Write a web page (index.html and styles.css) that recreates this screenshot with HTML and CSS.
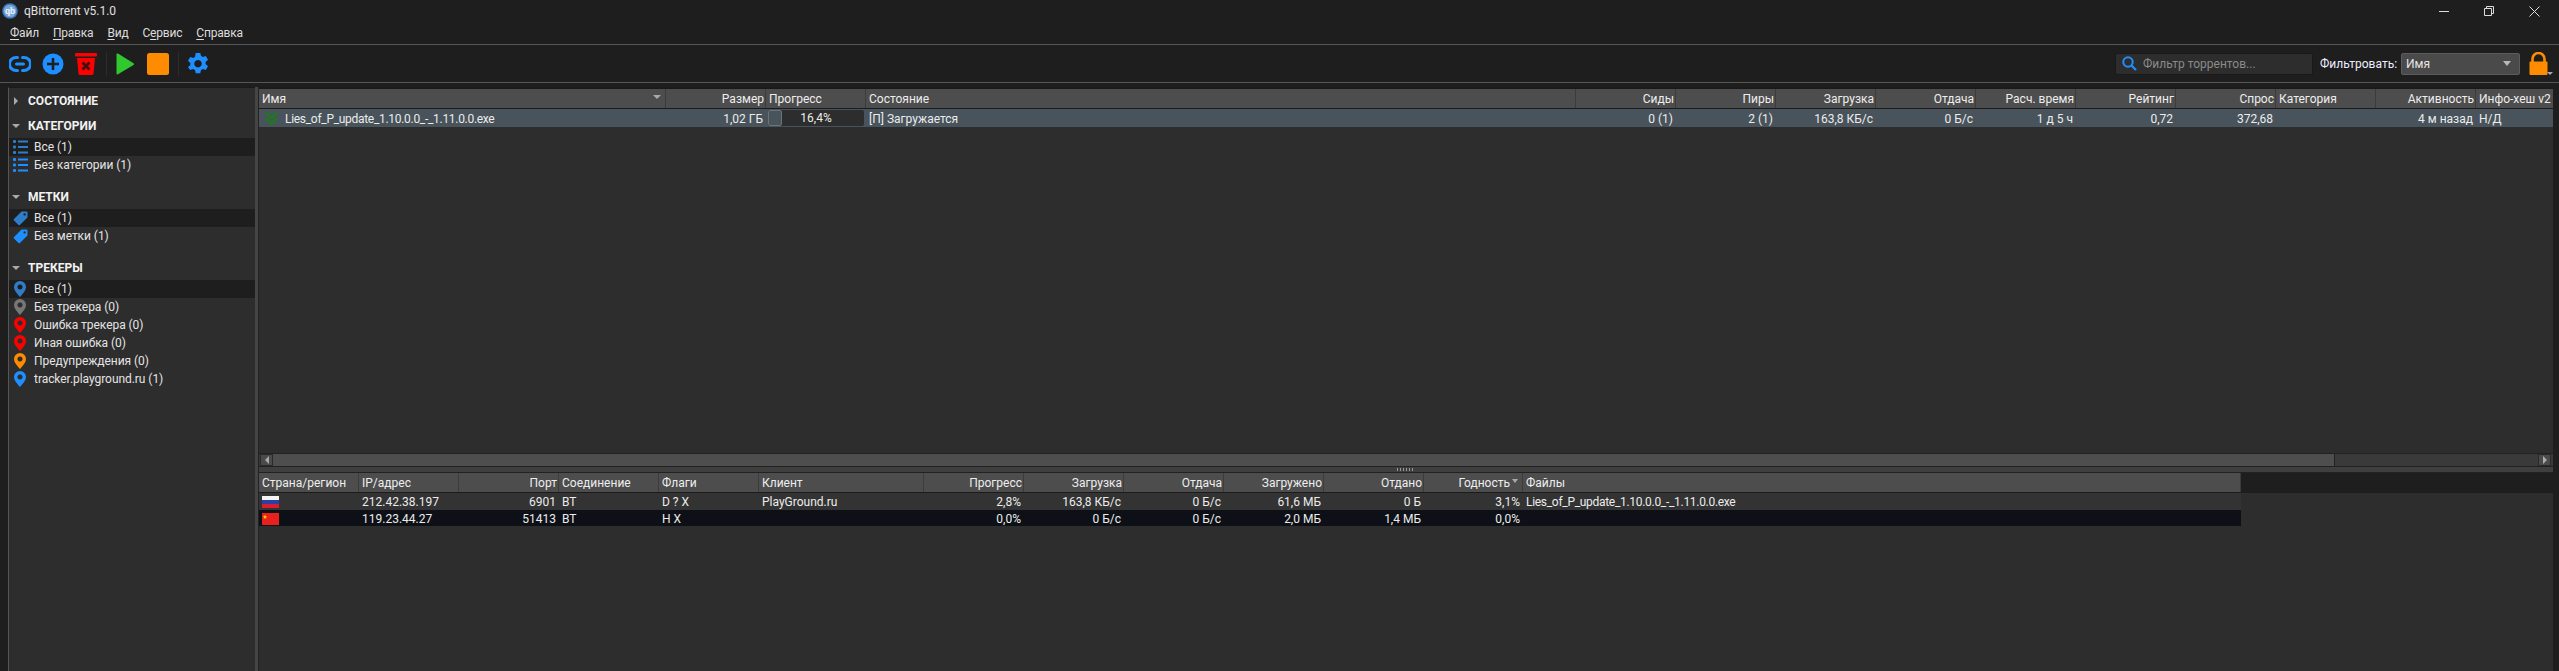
FILE: index.html
```html
<!DOCTYPE html>
<html lang="ru">
<head>
<meta charset="utf-8">
<title>qBittorrent v5.1.0</title>
<link rel="stylesheet" href="styles.css">
</head>
<body>
<svg class="defs" width="0" height="0">
  <defs>
    <symbol id="i-list" viewBox="0 0 15 14"><g fill="currentColor"><rect x="0" y="0" width="3" height="3" rx="1"/><rect x="5" y="0.5" width="10" height="2"/><rect x="0" y="5.5" width="3" height="3" rx="1"/><rect x="5" y="6" width="10" height="2"/><rect x="0" y="11" width="3" height="3" rx="1"/><rect x="5" y="11.5" width="10" height="2"/></g></symbol>
    <symbol id="i-tag" viewBox="0 0 15 15"><path fill="currentColor" fill-rule="evenodd" d="M9 0.5h4.5a1 1 0 0 1 1 1V6a1 1 0 0 1-.3.7L6.9 14a1 1 0 0 1-1.4 0L1 9.5a1 1 0 0 1 0-1.4L8.3.8A1 1 0 0 1 9 .5zM11.6 2.2a1.2 1.2 0 1 0 .01 0z"/></symbol>
    <symbol id="i-pin" viewBox="0 0 12 16"><path fill="currentColor" fill-rule="evenodd" d="M6 0a6 6 0 0 1 6 6c0 3.4-3.6 7.4-6 10C3.600 13.400 0 9.400 0 6a6 6 0 0 1 6-6zM6 3.400a2.600 2.600 0 1 0 .01 0z"/></symbol>
  </defs>
</svg>
<div class="window">
  <header class="titlebar">
    <svg class="logo" viewBox="0 0 16 16" width="16" height="16"><circle cx="8" cy="8" r="7.800" fill="#3c78bd"/><circle cx="8" cy="8" r="6.300" fill="#7ba7d8"/><text x="8" y="10.800" text-anchor="middle" class="logo-text">qb</text></svg>
    <span class="title">qBittorrent v5.1.0</span>
    <div class="caption">
      <svg width="10" height="10" viewBox="0 0 10 10"><path d="M0 5.500h10" stroke="#ddd" fill="none"/></svg>
      <svg width="10" height="10" viewBox="0 0 10 10"><path d="M.5 2.500h7v7h-7zM2.500 2.500V.5h7v7H7.500" stroke="#ddd" fill="none"/></svg>
      <svg width="11" height="11" viewBox="0 0 11 11"><path d="M.5.5l10 10M10.500.5l-10 10" stroke="#ddd" fill="none"/></svg>
    </div>
  </header>
  <nav class="menubar">
    <span class="menu m1"><u>Ф</u>айл</span>
    <span class="menu m2"><u>П</u>равка</span>
    <span class="menu m3"><u>В</u>ид</span>
    <span class="menu m4">С<u>е</u>рвис</span>
    <span class="menu m5"><u>С</u>правка</span>
  </nav>
  <div class="toolbar">
    <svg class="tool" width="22" height="22" viewBox="0 0 22 22"><path d="M8.500 4.500H7a6.500 6.500 0 0 0 0 13h1.500M13.500 4.500H15a6.500 6.500 0 0 1 0 13h-1.500" stroke="#1e8fff" stroke-width="3" fill="none" stroke-linecap="round"/><path d="M7.500 11h7" stroke="#1e8fff" stroke-width="3" stroke-linecap="round"/></svg>
    <svg class="tool t-add" width="22" height="22" viewBox="0 0 22 22"><circle cx="11" cy="11" r="10.500" fill="#1e8fff"/><path d="M11 5v12M5 11h12" stroke="#1e1e1e" stroke-width="2.600"/></svg>
    <svg class="tool t-del" width="22" height="22" viewBox="0 0 22 22"><rect x="0" y="0" width="22" height="3.500" rx="1" fill="#f00"/><path d="M2 5h18l-1.500 15.500a1.500 1.500 0 0 1-1.500 1.500H5a1.500 1.500 0 0 1-1.500-1.500z" fill="#f00"/><path d="M7.500 9.500l7 7M14.500 9.500l-7 7" stroke="#401010" stroke-width="2.800"/></svg>
    <span class="tool-sep s1"></span>
    <svg class="tool t-play" width="18" height="22" viewBox="0 0 18 22"><path d="M1.500 0.500a1 1 0 0 0-1 1v19a1 1 0 0 0 1.500.8L17.500 12a1 1 0 0 0 0-1.800L2 .6a1 1 0 0 0-.5-.1z" fill="#2fc82f"/></svg>
    <svg class="tool t-stop" width="22" height="22" viewBox="0 0 22 22"><rect width="22" height="22" rx="2.500" fill="#ff8c00"/></svg>
    <span class="tool-sep s2"></span>
    <svg class="tool t-gear" width="22" height="22" viewBox="0 0 22 22"><path fill="#1e8fff" fill-rule="evenodd" d="M8.700 0h4.600l.6 3.100 1.900 1.100 3-1 2.200 3.900-2.400 2.100v2.200l2.400 2.100-2.200 3.900-3-1-1.900 1.100-.6 3.100H8.700l-.6-3.100-1.900-1.100-3 1L1 14.500l2.400-2.100v-2.200L1 8.100l2.200-3.900 3 1 1.900-1.100zM11 7.300a3.700 3.700 0 1 0 .01 0z" transform="translate(0 -.3)"/></svg>
    <div class="filter-group">
      <label class="search">
        <svg width="15" height="15" viewBox="0 0 15 15"><circle cx="6" cy="6" r="4.700" stroke="#1e8fff" stroke-width="2" fill="none"/><path d="M9.500 9.500l4.500 4.500" stroke="#1e8fff" stroke-width="2.200"/></svg>
        <span class="placeholder">Фильтр торрентов...</span>
      </label>
      <span class="filter-label">Фильтровать:</span>
      <div class="combo"><span>Имя</span><i class="tri tri-combo"></i></div>
      <div class="lock">
        <svg width="19" height="23" viewBox="0 0 19 23"><path d="M3.500 11V7a6 6 0 0 1 12 0v4" stroke="#ff8c00" stroke-width="2.600" fill="none"/><rect x="0.500" y="9.500" width="18" height="13.500" rx="1" fill="#ff8c00"/></svg>
        <i class="tri tri-lock"></i>
      </div>
    </div>
  </div>
  <div class="workspace">
    <aside class="sidebar">
      <section class="group">
        <h2 class="group-head"><i class="tri-right"></i>СОСТОЯНИЕ</h2>
      </section>
      <section class="group">
        <h2 class="group-head"><i class="tri tri-head"></i>КАТЕГОРИИ</h2>
        <div class="item selected"><svg class="ico ic-dim" width="15" height="14"><use href="#i-list"/></svg>Все (1)</div>
        <div class="item"><svg class="ico ic-blue" width="15" height="14"><use href="#i-list"/></svg>Без категории (1)</div>
      </section>
      <section class="group">
        <h2 class="group-head"><i class="tri tri-head"></i>МЕТКИ</h2>
        <div class="item selected"><svg class="ico ic-dim" width="15" height="15"><use href="#i-tag"/></svg>Все (1)</div>
        <div class="item"><svg class="ico ic-blue" width="15" height="15"><use href="#i-tag"/></svg>Без метки (1)</div>
      </section>
      <section class="group">
        <h2 class="group-head"><i class="tri tri-head"></i>ТРЕКЕРЫ</h2>
        <div class="item selected"><svg class="ico pin ic-dim" width="12" height="16"><use href="#i-pin"/></svg>Все (1)</div>
        <div class="item"><svg class="ico pin ic-grey" width="12" height="16"><use href="#i-pin"/></svg>Без трекера (0)</div>
        <div class="item"><svg class="ico pin ic-red" width="12" height="16"><use href="#i-pin"/></svg>Ошибка трекера (0)</div>
        <div class="item"><svg class="ico pin ic-red" width="12" height="16"><use href="#i-pin"/></svg>Иная ошибка (0)</div>
        <div class="item"><svg class="ico pin ic-orange" width="12" height="16"><use href="#i-pin"/></svg>Предупреждения (0)</div>
        <div class="item"><svg class="ico pin ic-blue" width="12" height="16"><use href="#i-pin"/></svg>tracker.playground.ru (1)</div>
      </section>
    </aside>
    <div class="vsplit"></div>
    <main class="main">
      <section class="torrents">
        <div class="t-grid t-head">
          <div class="hc name-head">Имя<i class="tri tri-sort"></i></div>
          <div class="hc r">Размер</div>
          <div class="hc">Прогресс</div>
          <div class="hc">Состояние</div>
          <div class="hc r">Сиды</div>
          <div class="hc r">Пиры</div>
          <div class="hc r">Загрузка</div>
          <div class="hc r">Отдача</div>
          <div class="hc r">Расч. время</div>
          <div class="hc r">Рейтинг</div>
          <div class="hc r">Спрос</div>
          <div class="hc">Категория</div>
          <div class="hc r">Активность</div>
          <div class="hc">Инфо-хеш v2</div>
        </div>
        <div class="t-grid t-row">
          <div class="c name-cell">
            <svg class="chev" width="13" height="13" viewBox="0 0 13 13"><path d="M1 1l5.500 4.500L12 1M1 7l5.500 4.500L12 7" stroke="#1d7a1d" stroke-width="2.600" fill="none"/></svg>
            <span class="fname">Lies_of_P_update_1.10.0.0_-_1.11.0.0.exe</span>
          </div>
          <div class="c r">1,02 ГБ</div>
          <div class="c prog"><div class="bar"><span class="chunk"></span><span class="bar-text">16,4%</span></div></div>
          <div class="c">[П] Загружается</div>
          <div class="c r">0 (1)</div>
          <div class="c r">2 (1)</div>
          <div class="c r">163,8 КБ/с</div>
          <div class="c r">0 Б/с</div>
          <div class="c r">1 д 5 ч</div>
          <div class="c r">0,72</div>
          <div class="c r">372,68</div>
          <div class="c"></div>
          <div class="c r">4 м назад</div>
          <div class="c">Н/Д</div>
        </div>
        <div class="t-fill"></div>
        <div class="hscroll">
          <span class="sb-btn"><i class="sb-left"></i></span>
          <span class="sb-thumb"></span>
          <span class="sb-track"></span>
          <span class="sb-btn"><i class="sb-right"></i></span>
        </div>
      </section>
      <div class="hsplit"><span class="grip"></span></div>
      <section class="peers">
        <div class="p-head-wrap">
          <div class="p-grid p-head">
            <div class="hc">Страна/регион</div>
            <div class="hc">IP/адрес</div>
            <div class="hc r">Порт</div>
            <div class="hc">Соединение</div>
            <div class="hc">Флаги</div>
            <div class="hc">Клиент</div>
            <div class="hc r">Прогресс</div>
            <div class="hc r">Загрузка</div>
            <div class="hc r">Отдача</div>
            <div class="hc r">Загружено</div>
            <div class="hc r">Отдано</div>
            <div class="hc r sort-col"><i class="tri tri-sort2"></i>Годность</div>
            <div class="hc">Файлы</div>
          </div>
        </div>
        <div class="p-grid p-row p-a">
          <div class="c"><svg class="flag" width="17" height="12" viewBox="0 0 17 12"><rect width="17" height="4" fill="#f4f4f4"/><rect y="4" width="17" height="4" fill="#2b3fa8"/><rect y="8" width="17" height="4" fill="#d5202b"/></svg></div>
          <div class="c">212.42.38.197</div>
          <div class="c r">6901</div>
          <div class="c">BT</div>
          <div class="c">D ? X</div>
          <div class="c">PlayGround.ru</div>
          <div class="c r">2,8%</div>
          <div class="c r">163,8 КБ/с</div>
          <div class="c r">0 Б/с</div>
          <div class="c r">61,6 МБ</div>
          <div class="c r">0 Б</div>
          <div class="c r">3,1%</div>
          <div class="c"><span class="fname">Lies_of_P_update_1.10.0.0_-_1.11.0.0.exe</span></div>
        </div>
        <div class="p-grid p-row p-b">
          <div class="c"><svg class="flag" width="17" height="12" viewBox="0 0 17 12"><rect width="17" height="12" fill="#e8211d"/><path d="M3 1.500l.6 1.700 1.700 0-1.400 1 .5 1.700L3 4.900l-1.400 1 .5-1.700-1.400-1 1.700 0z" fill="#ffd900"/></svg></div>
          <div class="c">119.23.44.27</div>
          <div class="c r">51413</div>
          <div class="c">BT</div>
          <div class="c">H X</div>
          <div class="c"></div>
          <div class="c r">0,0%</div>
          <div class="c r">0 Б/с</div>
          <div class="c r">0 Б/с</div>
          <div class="c r">2,0 МБ</div>
          <div class="c r">1,4 МБ</div>
          <div class="c r">0,0%</div>
          <div class="c"></div>
        </div>
      </section>
    </main>
  </div>
</div>
</body>
</html>
```
FILE: styles.css
```css
* { box-sizing: border-box; }
html, body { margin: 0; height: 100%; overflow: hidden; }
body { background: #1e1e1e; color: #e6e6e6; font: 12px/16px Roboto, "Noto Sans", sans-serif; }
.defs { position: absolute; }
.window { display: flex; flex-direction: column; height: 100vh; }

.titlebar { height: 22px; display: flex; align-items: center; padding-left: 2px; flex: none; }
.logo { flex: none; }
.logo-text { font: bold 9px Roboto, sans-serif; fill: #e8f0fa; }
.title { margin-left: 6px; color: #e0e0e0; }
.caption { margin-left: auto; display: flex; align-items: center; gap: 35px; padding-right: 19px; }

.menubar { height: 23px; flex: none; display: flex; align-items: center; border-bottom: 1px solid #565656; padding-left: 10px; color: #dcdcdc; letter-spacing: -.2px; }
.menu { margin-right: 14px; }
.menu u { text-underline-offset: 2px; }

.toolbar { height: 38px; flex: none; display: flex; align-items: center; padding-left: 9px; border-bottom: 1px solid #565656; }
.tool { flex: none; margin-right: 11px; }
.tool-sep { width: 1px; height: 24px; background: #2c2c2c; margin: 0 9px 0 -1px; flex: none; }
.tool.t-del { margin-right: 10px; }
.tool.t-play { margin-right: 13px; margin-left: 0; }
.tool.t-stop { margin-right: 10px; }
.tool.t-gear { margin-left: -1px; }
.filter-group { margin-left: auto; display: flex; align-items: center; padding-right: 3px; }
.search { width: 198px; height: 22px; background: #2d2d2d; border-radius: 2px; border: 1px solid #191919; display: flex; align-items: center; padding-left: 6px; gap: 6px; }
.placeholder { color: #8a8a8a; }
.filter-label { width: 88px; padding-left: 7px; color: #eef; }
.combo { width: 119px; height: 22px; background: #4a4a4a; border: 1px solid #5c5c5c; border-radius: 2px; display: flex; align-items: center; justify-content: space-between; padding: 0 8px 0 4px; }
.lock { margin-left: 9px; width: 27px; height: 23px; position: relative; }
.tri { display: inline-block; width: 0; height: 0; border-left: 4px solid transparent; border-right: 4px solid transparent; border-top: 4px solid #aaa; }
.tri-combo { border-left-width: 4px; border-right-width: 4px; border-top: 5px solid #b8b8b8; }
.tri-lock { position: absolute; right: 3px; bottom: 0; border-left-width: 3px; border-right-width: 3px; border-top-width: 3px; }

.workspace { flex: 1; min-height: 0; display: flex; padding: 4px 6px 0 8px; }
.sidebar { width: 247px; flex: none; background: #2d2d2d; border-left: 1px solid #565656; border-top: 1px solid #1a1a1a; padding-top: 1px; overflow: hidden; }
.group { margin-bottom: 11px; }
.group:first-child { margin-bottom: 1px; }
.group-head { height: 24px; margin: 0; padding-left: 19px; display: flex; align-items: center; font: bold 12px Roboto, sans-serif; color: #f2f2f2; position: relative; }
.tri-head { position: absolute; left: 3px; top: 10px; }
.tri-right { position: absolute; left: 5px; top: 8px; width: 0; height: 0; border-top: 4px solid transparent; border-bottom: 4px solid transparent; border-left: 4px solid #aaa; }
.item { height: 18px; display: flex; align-items: center; padding-left: 4px; color: #e4e4e4; letter-spacing: -.05px; }
.item.selected { background: #1e1e1e; }
.ico { width: 15px; margin-right: 6px; flex: none; }
.pin { width: 12px; margin-left: 1px; margin-right: 8px; }
.ic-blue { color: #1e8fff; }
.ic-dim { color: #2f7cc8; }
.ic-grey { color: #777; }
.ic-red { color: #f00; }
.ic-orange { color: #ff8c00; }

.vsplit { width: 4px; flex: none; background: #454545; border-right: 1px solid #222; }
.main { flex: 1; min-width: 0; display: flex; flex-direction: column; }
.torrents { height: 380px; flex: none; display: flex; flex-direction: column; background: #2d2d2d; border-top: 2px solid #1a1a1a; overflow: hidden; }
.t-grid { display: grid; grid-template-columns: 407px 100px 100px 710px repeat(10, 100px); flex: none; }
.t-head, .p-head { height: 20px; background: #4d4d4d; border-bottom: 1px solid #1b1b1b; }
.hc { border-right: 1px solid #3c3c3c; padding: 0 3px; line-height: 21px; white-space: nowrap; overflow: hidden; color: #eee; position: relative; }
.hc.r { text-align: right; padding-right: 1px; }
.tri-sort { position: absolute; right: 4px; top: 6px; }
.t-row { height: 18px; background: #48535b; }
.c { padding: 1px 3px 0; line-height: 18px; white-space: nowrap; overflow: hidden; color: #ececec; }
.c.r { text-align: right; }
.fname { letter-spacing: -.3px; }
.name-cell { display: flex; align-items: center; }
.chev { margin: 0 7px 0 3px; flex: none; }
.c.prog { padding: 1px 2px; }
.bar { height: 16px; background: #2d2d2d; border-radius: 2px; position: relative; display: flex; align-items: center; justify-content: center; }
.chunk { position: absolute; left: 0; top: 0; width: 14px; height: 16px; background: #48535b; border: 1px solid #6b747a; border-radius: 2px; }
.bar-text { position: relative; line-height: 18px; }
.t-fill { flex: 1; }
.hscroll { height: 14px; flex: none; display: flex; align-items: stretch; background: #3a3a3a; border-top: 1px solid #222; border-bottom: 1px solid #222; padding: 0 2px 0 1px; }
.sb-btn { width: 13px; flex: none; background: #4a4a4a; border: 1px solid #2a2a2a; display: flex; align-items: center; justify-content: center; }
.sb-left { width: 0; height: 0; border-top: 4px solid transparent; border-bottom: 4px solid transparent; border-right: 4px solid #aaa; }
.sb-right { width: 0; height: 0; border-top: 4px solid transparent; border-bottom: 4px solid transparent; border-left: 4px solid #aaa; }
.sb-thumb { width: 2062px; flex: none; background: #4e4e4e; border-right: 1px solid #222; }
.sb-track { flex: 1; }

.hsplit { height: 6px; flex: none; background: #3f3f3f; border-bottom: 1px solid #222; display: flex; justify-content: center; align-items: center; }
.grip { width: 18px; height: 3px; background: repeating-linear-gradient(90deg, #999 0 1px, transparent 1px 3px); }
.peers { flex: 1; min-height: 0; background: #2d2d2d; overflow: hidden; }
.p-head-wrap { background: #1e1e1e; height: 20px; }
.p-grid { display: grid; grid-template-columns: 100px 100px 100px 100px 100px 165px 100px 100px 100px 100px 100px 99px 718px; width: 1982px; }
.sort-col { padding-left: 0; }
.tri-sort2 { position: absolute; right: 4px; top: 6px; border-left-width: 3px; border-right-width: 3px; border-top-width: 4px; }
.hc.r.sort-col { padding-right: 12px; }
.p-row { height: 17px; }
.p-row .c { line-height: 17px; }
.p-a { background: #333; }
.p-b { background: #0d1117; height: 16px; }
.flag { display: block; margin-top: 2px; }
```
